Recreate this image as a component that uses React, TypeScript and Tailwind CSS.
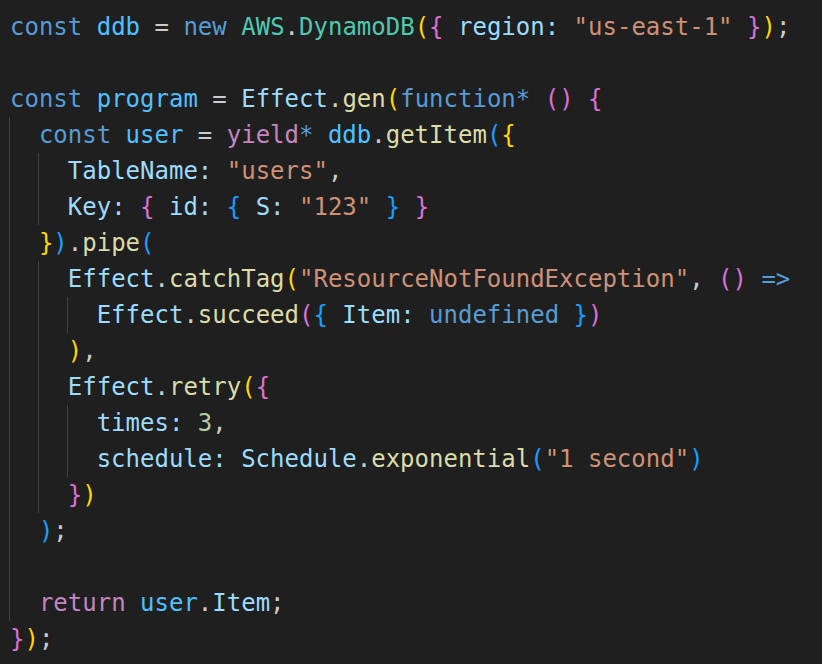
import React from "react";

type Tok = [string, string];

const K = "text-[#569cd6]";
const C = "text-[#c586c0]";
const V = "text-[#4fc1ff]";
const P = "text-[#9cdcfe]";
const T = "text-[#4ec9b0]";
const F = "text-[#dcdcaa]";
const S = "text-[#ce9178]";
const N = "text-[#b5cea8]";
const D = "text-[#cccccc]";
const Y = "text-[#ffd700]";
const O = "text-[#da70d6]";
const B = "text-[#179fff]";

const lines: { indent: number; toks: Tok[] }[] = [
  {
    indent: 0,
    toks: [
      [K, "const"], [D, " "], [V, "ddb"], [D, " = "], [K, "new"], [D, " "], [T, "AWS"], [D, "."], [T, "DynamoDB"],
      [Y, "("], [O, "{"], [D, " "], [P, "region:"], [D, " "], [S, '"us-east-1"'], [D, " "], [O, "}"], [Y, ")"], [D, ";"],
    ],
  },
  { indent: 0, toks: [] },
  {
    indent: 0,
    toks: [
      [K, "const"], [D, " "], [V, "program"], [D, " = "], [P, "Effect"], [D, "."], [F, "gen"], [Y, "("],
      [K, "function*"], [D, " "], [O, "()"], [D, " "], [O, "{"],
    ],
  },
  {
    indent: 1,
    toks: [
      [K, "const"], [D, " "], [V, "user"], [D, " = "], [C, "yield"], [K, "*"], [D, " "], [V, "ddb"], [D, "."],
      [F, "getItem"], [B, "("], [Y, "{"],
    ],
  },
  { indent: 2, toks: [[P, "TableName:"], [D, " "], [S, '"users"'], [D, ","]] },
  {
    indent: 2,
    toks: [
      [P, "Key:"], [D, " "], [O, "{"], [D, " "], [P, "id:"], [D, " "], [B, "{"], [D, " "], [P, "S:"], [D, " "],
      [S, '"123"'], [D, " "], [B, "}"], [D, " "], [O, "}"],
    ],
  },
  { indent: 1, toks: [[Y, "}"], [B, ")"], [D, "."], [F, "pipe"], [B, "("]] },
  {
    indent: 2,
    toks: [
      [P, "Effect"], [D, "."], [F, "catchTag"], [Y, "("], [S, '"ResourceNotFoundException"'], [D, ", "], [O, "()"],
      [D, " "], [K, "=>"],
    ],
  },
  {
    indent: 3,
    toks: [
      [P, "Effect"], [D, "."], [F, "succeed"], [O, "("], [B, "{"], [D, " "], [P, "Item:"], [D, " "], [K, "undefined"],
      [D, " "], [B, "}"], [O, ")"],
    ],
  },
  { indent: 2, toks: [[Y, ")"], [D, ","]] },
  { indent: 2, toks: [[P, "Effect"], [D, "."], [F, "retry"], [Y, "("], [O, "{"]] },
  { indent: 3, toks: [[P, "times:"], [D, " "], [N, "3"], [D, ","]] },
  {
    indent: 3,
    toks: [
      [P, "schedule:"], [D, " "], [P, "Schedule"], [D, "."], [F, "exponential"], [B, "("], [S, '"1 second"'], [B, ")"],
    ],
  },
  { indent: 2, toks: [[O, "}"], [Y, ")"]] },
  { indent: 1, toks: [[B, ")"], [D, ";"]] },
  { indent: 1, toks: [] },
  { indent: 1, toks: [[C, "return"], [D, " "], [V, "user"], [D, "."], [P, "Item"], [D, ";"]] },
  { indent: 0, toks: [[O, "}"], [Y, ")"], [D, ";"]] },
];

export default function App() {
  return (
    <div className="min-h-screen w-full bg-[#1f1f1f] pt-[9px] pl-[10px] font-['DejaVu_Sans_Mono',monospace] text-[24px] leading-[36px]">
      {lines.map((line, i) => (
        <div key={i} className="flex h-[36px] whitespace-pre">
          {Array.from({ length: line.indent }).map((_, j) => (
            <span key={j} className="-ml-px h-[36px] w-[calc(2ch+1px)] shrink-0 border-l border-[#404040]" />
          ))}
          {line.toks.map(([cls, text], j) => (
            <span key={j} className={cls}>
              {text}
            </span>
          ))}
        </div>
      ))}
    </div>
  );
}
